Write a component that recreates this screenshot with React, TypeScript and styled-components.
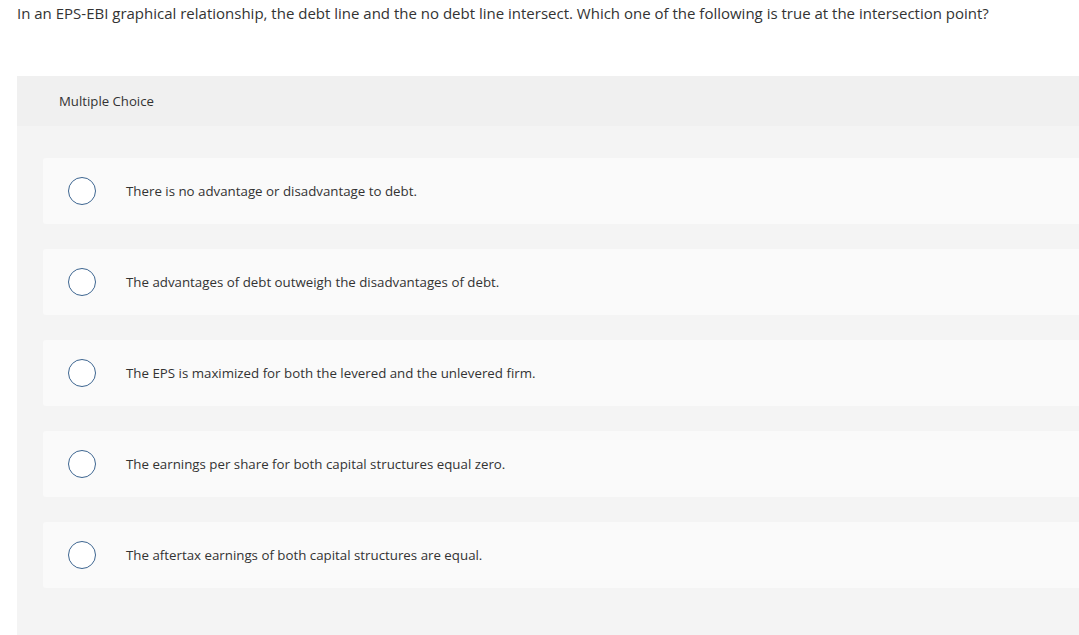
import React from "react";
import styled, { createGlobalStyle } from "styled-components";

const GlobalStyle = createGlobalStyle`
  html, body {
    margin: 0;
    padding: 0;
    background: #ffffff;
    overflow: hidden;
  }
  body {
    font-family: "Open Sans", Arial, sans-serif;
    color: #333333;
  }
`;

const choices = [
  "There is no advantage or disadvantage to debt.",
  "The advantages of debt outweigh the disadvantages of debt.",
  "The EPS is maximized for both the levered and the unlevered firm.",
  "The earnings per share for both capital structures equal zero.",
  "The aftertax earnings of both capital structures are equal.",
];

const App: React.FC = () => {
  return (
    <Page>
      <GlobalStyle />
      <Question>
        In an EPS-EBI graphical relationship, the debt line and the no debt line intersect. Which one of the
        following is true at the intersection point?
      </Question>
      <Panel>
        <PanelHeader>Multiple Choice</PanelHeader>
        <ChoiceList>
          {choices.map((c) => (
            <Choice key={c}>
              <Radio />
              <ChoiceText>{c}</ChoiceText>
            </Choice>
          ))}
        </ChoiceList>
      </Panel>
    </Page>
  );
};

const Page = styled.div`
  box-sizing: border-box;
  width: 1079px;
  height: 635px;
  padding: 3px 0 0 17px;
  display: flex;
  flex-direction: column;
`;

const Question = styled.p`
  margin: 0;
  font-size: 15px;
  line-height: 20px;
  color: #333333;
  white-space: nowrap;
`;

const Panel = styled.div`
  margin-top: 53px;
  flex: 1;
  background: #f4f4f4;
  border-radius: 2px 0 0 0;
`;

const PanelHeader = styled.div`
  height: 50px;
  display: flex;
  align-items: center;
  padding-left: 42px;
  background: #f0f0f0;
  font-size: 13.2px;
  color: #333333;
`;

const ChoiceList = styled.div`
  display: flex;
  flex-direction: column;
  gap: 25px;
  padding: 32px 0 0 26px;
`;

const Choice = styled.div`
  display: flex;
  align-items: center;
  height: 66px;
  background: #fafafa;
  border-radius: 3px 0 0 3px;
  padding-left: 25px;
`;

const Radio = styled.span`
  box-sizing: border-box;
  width: 28px;
  height: 28px;
  border-radius: 50%;
  border: 1.5px solid #3d6590;
  background: #ffffff;
  flex-shrink: 0;
`;

const ChoiceText = styled.span`
  margin-left: 30px;
  font-size: 13.3px;
  color: #333333;
`;

export default App;
